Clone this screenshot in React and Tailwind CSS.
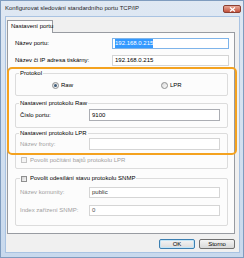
function TextBox({ children, className = "", border = "border-[#abadb3]" }) {
  return (
    <div className={`flex items-center bg-white border ${border} px-[2px] overflow-hidden whitespace-nowrap ${className}`}>
      {children}
    </div>
  );
}

function Radio({ checked }) {
  return (
    <span className="w-[7px] h-[7px] rounded-full border border-[#8e8f8f] bg-gradient-to-br from-[#d9d9d9] to-[#fbfbfb] flex items-center justify-center shrink-0">
      {checked && <span className="w-[3px] h-[3px] rounded-full bg-[#3f5d7a]" />}
    </span>
  );
}

function Check({ disabled }) {
  return disabled ? (
    <span className="w-[6px] h-[6px] border border-[#c4c4c4] bg-[#f4f4f4] shrink-0" />
  ) : (
    <span className="w-[6px] h-[6px] border border-[#8f8f8f] bg-gradient-to-br from-[#d2d2d2] to-[#f7f7f7] shrink-0" />
  );
}

export default function App() {
  return (
    <div className="w-[244px] h-[258px] flex flex-col border border-[#7f9cbf] bg-gradient-to-b from-[#dfe8f3] to-[#c8d9ed] font-['Liberation_Sans',Arial,sans-serif] text-[6px] leading-[7px] text-black overflow-hidden">
      {/* title bar */}
      <div className="h-[15px] flex items-start justify-between pl-[4px] pr-[2px] shrink-0">
        <span className="mt-[4px] text-[#1e1e1e] whitespace-nowrap">
          Konfigurovat sledování standardního portu TCP/IP
        </span>
        <div className="mt-[4px] w-[18px] h-[8px] rounded-[2px] border border-[#8c3f31] bg-gradient-to-b from-[#e7a897] to-[#c4513c] flex items-center justify-center">
          <svg width="7" height="5" viewBox="0 0 7 5">
            <path d="M1 0.5 L6 4.5 M6 0.5 L1 4.5" stroke="#ffffff" strokeWidth="1.3" fill="none" />
          </svg>
        </div>
      </div>

      {/* client area */}
      <div className="relative flex-1 ml-[4px] mr-[3px] mb-[4px] border border-[#a9c3e2] bg-[#f0f0f0] flex flex-col">
        {/* tab */}
        <div className="ml-[1px] mt-[3px] w-[46px] h-[13px] -mb-[1px] relative z-10 bg-[#fcfcfc] border border-b-0 border-[#989ba1] flex items-center pl-[3px] pb-[1px] whitespace-nowrap">
          Nastavení portu
        </div>

        {/* tab panel */}
        <div className="ml-[1px] w-[228px] h-[202px] border border-[#989ba1] bg-[#fcfcfc] pl-[7px] pr-[4px] flex flex-col">
          <div className="mt-[5px] h-[11px] flex items-center">
            <span className="w-[97px] shrink-0">Název portu:</span>
            <TextBox className="w-[117px] h-[11px]" border="border-[#7eb4ea]">
              <span className="bg-[#3399ff] text-white leading-[9px]">192.168.0.215</span>
            </TextBox>
          </div>
          <div className="mt-[6px] h-[11px] flex items-center">
            <span className="w-[97px] shrink-0">Název či IP adresa tiskárny:</span>
            <TextBox className="w-[117px] h-[11px]" border="border-[#d5d5d5]">
              <span>192.168.0.215</span>
            </TextBox>
          </div>

          {/* Protokol */}
          <fieldset className="mt-[4px] w-[213px] h-[26px] border border-[#dcdcdc] rounded-[2px]">
            <legend className="ml-[3px] px-[1px] leading-[7px]">Protokol</legend>
            <div className="mt-[4px] h-[8px] flex items-center pl-[36px]">
              <div className="w-[109px] flex items-center gap-[2px]">
                <Radio checked />
                <span>Raw</span>
              </div>
              <div className="flex items-center gap-[2px]">
                <Radio />
                <span>LPR</span>
              </div>
            </div>
          </fieldset>

          {/* Raw */}
          <fieldset className="mt-[4px] w-[213px] h-[28px] border border-[#dcdcdc] rounded-[2px] pl-[3px]">
            <legend className="ml-[0px] px-[1px] leading-[7px]">Nastavení protokolu Raw</legend>
            <div className="mt-[2px] h-[12px] flex items-center pl-[1px]">
              <span className="w-[69px] shrink-0">Číslo portu:</span>
              <TextBox className="w-[131px] h-[12px]">
                <span>9100</span>
              </TextBox>
            </div>
          </fieldset>

          {/* LPR */}
          <fieldset className="mt-[2px] w-[213px] h-[39px] border border-[#dcdcdc] rounded-[2px] pl-[3px]">
            <legend className="ml-[0px] px-[1px] leading-[7px]">Nastavení protokolu LPR</legend>
            <div className="mt-[1px] h-[12px] flex items-center pl-[1px]">
              <span className="w-[69px] shrink-0 text-[#a0a0a0]">Název fronty:</span>
              <TextBox className="w-[131px] h-[12px]" border="border-[#d5d5d5]">
                <span />
              </TextBox>
            </div>
            <div className="mt-[6px] h-[8px] flex items-center gap-[3px] pl-[2px]">
              <Check disabled />
              <span className="text-[#a0a0a0] whitespace-nowrap">Povolit počítání bajtů protokolu LPR</span>
            </div>
          </fieldset>

          {/* SNMP */}
          <fieldset className="mt-[6px] w-[213px] h-[51px] border border-[#dcdcdc] rounded-[2px] pl-[3px]">
            <legend className="ml-[1px] px-[1px] leading-[7px] flex items-center gap-[3px]">
              <Check />
              <span className="whitespace-nowrap">Povolit odesílání stavu protokolu SNMP</span>
            </legend>
            <div className="mt-[5px] h-[11px] flex items-center pl-[1px]">
              <span className="w-[69px] shrink-0 text-[#a0a0a0]">Název komunity:</span>
              <TextBox className="w-[131px] h-[11px]" border="border-[#d5d5d5]">
                <span className="text-[#333]">public</span>
              </TextBox>
            </div>
            <div className="mt-[7px] h-[11px] flex items-center pl-[1px]">
              <span className="w-[69px] shrink-0 text-[#a0a0a0]">Index zařízení SNMP:</span>
              <TextBox className="w-[131px] h-[11px]" border="border-[#d5d5d5]">
                <span className="text-[#555]">0</span>
              </TextBox>
            </div>
          </fieldset>
        </div>

        {/* buttons */}
        <div className="mt-[5px] flex justify-end gap-[4px] pr-[4px]">
          <button className="w-[36px] h-[10px] rounded-[2px] border border-[#3c7fb1] bg-gradient-to-b from-[#f4f4f4] to-[#dcdcdc] shadow-[inset_0_0_0_1px_#c4e5f6] flex items-center justify-center leading-[7px] text-[6px]">
            OK
          </button>
          <button className="w-[36px] h-[10px] rounded-[2px] border border-[#707070] bg-gradient-to-b from-[#f4f4f4] to-[#d8d8d8] flex items-center justify-center leading-[7px] text-[6px]">
            Storno
          </button>
        </div>

        {/* orange highlight annotation */}
        <div className="absolute left-[1px] top-[50px] w-[230px] h-[88px] border-2 border-[#f4a21f] rounded-[5px] pointer-events-none" />
      </div>
    </div>
  );
}
